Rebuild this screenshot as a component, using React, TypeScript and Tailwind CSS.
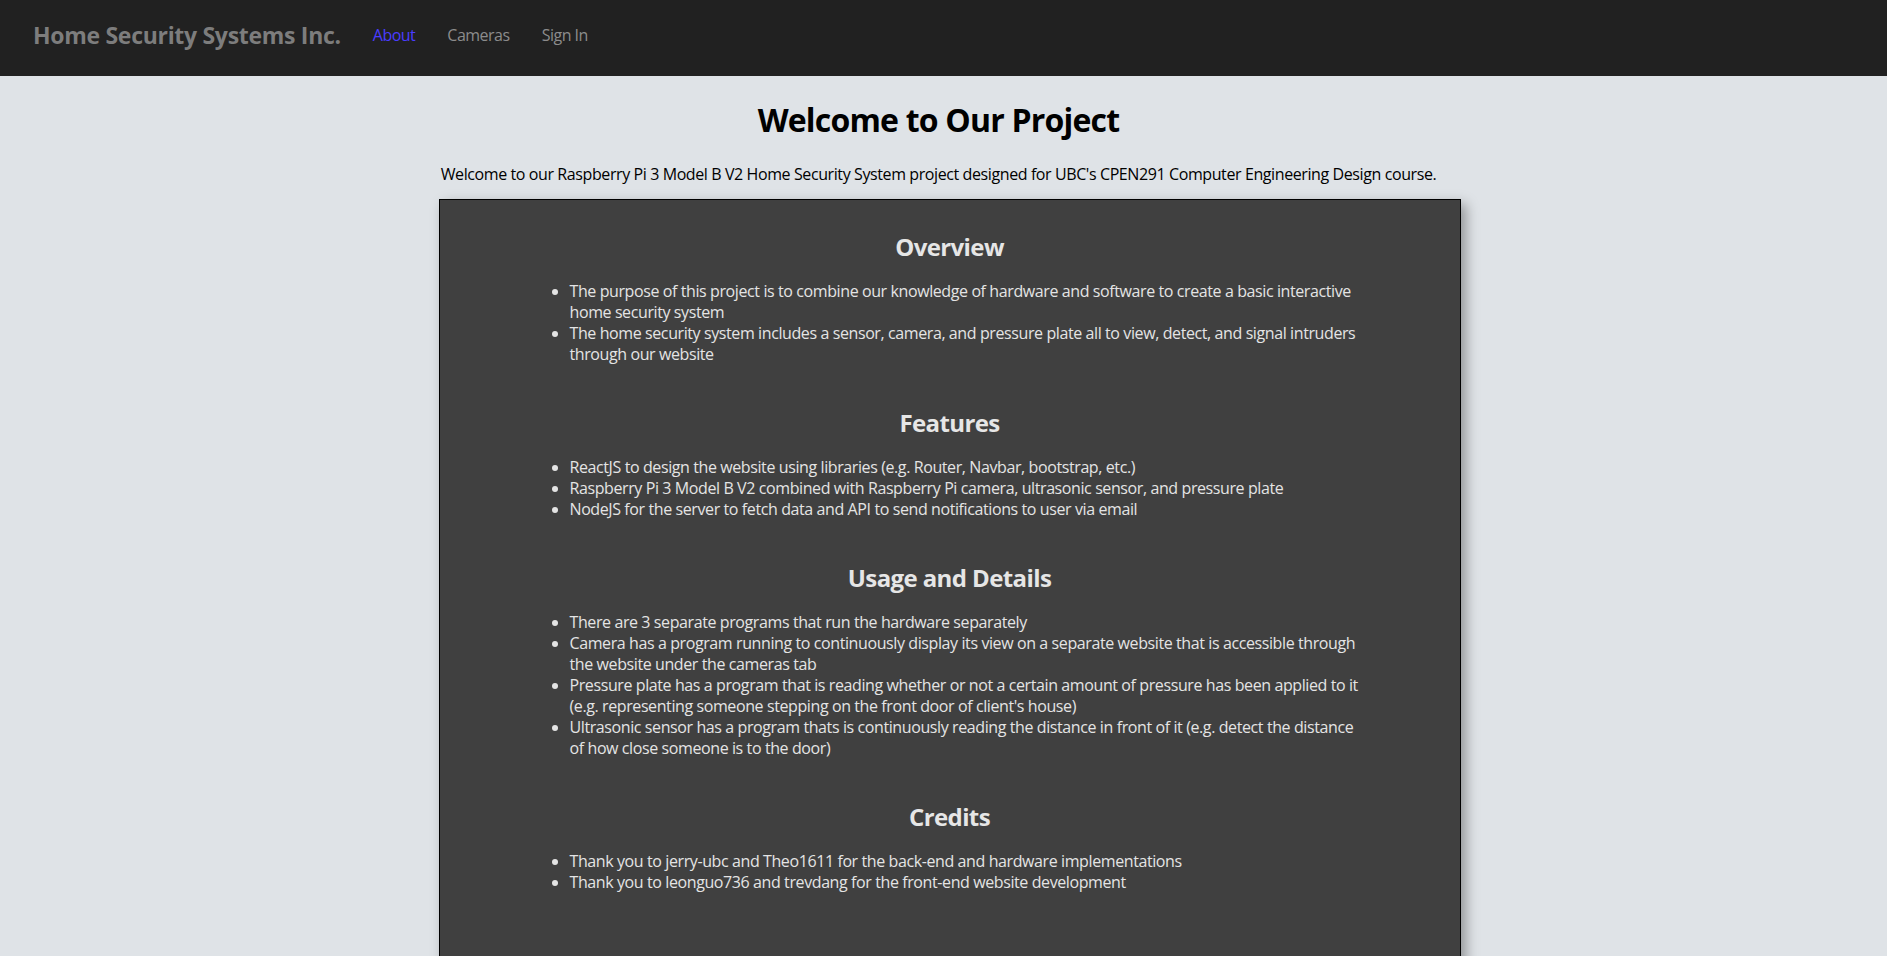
const sections = [
  {
    title: "Overview",
    items: [
      "The purpose of this project is to combine our knowledge of hardware and software to create a basic interactive home security system",
      "The home security system includes a sensor, camera, and pressure plate all to view, detect, and signal intruders through our website",
    ],
  },
  {
    title: "Features",
    items: [
      "ReactJS to design the website using libraries (e.g. Router, Navbar, bootstrap, etc.)",
      "Raspberry Pi 3 Model B V2 combined with Raspberry Pi camera, ultrasonic sensor, and pressure plate",
      "NodeJS for the server to fetch data and API to send notifications to user via email",
    ],
  },
  {
    title: "Usage and Details",
    items: [
      "There are 3 separate programs that run the hardware separately",
      "Camera has a program running to continuously display its view on a separate website that is accessible through the website under the cameras tab",
      "Pressure plate has a program that is reading whether or not a certain amount of pressure has been applied to it (e.g. representing someone stepping on the front door of client's house)",
      "Ultrasonic sensor has a program thats is continuously reading the distance in front of it (e.g. detect the distance of how close someone is to the door)",
    ],
  },
  {
    title: "Credits",
    items: [
      "Thank you to jerry-ubc and Theo1611 for the back-end and hardware implementations",
      "Thank you to leonguo736 and trevdang for the front-end website development",
    ],
  },
];

const App = () => {
  return (
    <div className="h-[956px] overflow-hidden bg-[#dfe3e7] font-['Open_Sans',sans-serif]">
      <nav className="h-[76px] bg-[#212121] flex items-center px-[33px] pb-[6px]">
        <span className="text-[23px] font-bold tracking-[-0.3px] text-[#7d7d7d]">Home Security Systems Inc.</span>
        <div className="flex items-center gap-8 ml-8 text-[16px] tracking-[-0.5px]">
          <a className="text-[#4a3cff]">About</a>
          <a className="text-[#8c8c8c]">Cameras</a>
          <a className="text-[#8c8c8c]">Sign In</a>
        </div>
      </nav>

      <main className="flex justify-center pr-[10px]">
        <div className="w-[1000px] flex flex-col items-start">
          <h1 className="w-full text-center text-[32px] leading-[38px] font-bold tracking-[-0.8px] text-black mt-[25px]">
            Welcome to Our Project
          </h1>
          <p className="w-full text-center text-[16px] leading-[21px] tracking-[-0.4px] text-black mt-[25px] whitespace-nowrap">
            Welcome to our Raspberry Pi 3 Model B V2 Home Security System project designed for UBC's CPEN291 Computer Engineering Design course.
          </p>

          <div className="w-[1022px] shrink-0 mt-[14px] bg-[#404040] border border-black shadow-[5px_5px_12px_rgba(0,0,0,0.35)] pt-8 pb-[120px] text-[#e4e4e4]">
            {sections.map((s, i) => (
              <section key={s.title} className={i > 0 ? "mt-[43px]" : ""}>
                <h4 className="text-center text-[24px] leading-[29px] font-bold tracking-[-0.6px] text-[#e6e6e6]">{s.title}</h4>
                <ul className="mt-5 ml-[98px] w-[832px] pl-8 list-disc text-[16px] leading-[21px] tracking-[-0.4px]">
                  {s.items.map((item) => (
                    <li key={item}>{item}</li>
                  ))}
                </ul>
              </section>
            ))}
          </div>
        </div>
      </main>
    </div>
  );
};

export default App;
